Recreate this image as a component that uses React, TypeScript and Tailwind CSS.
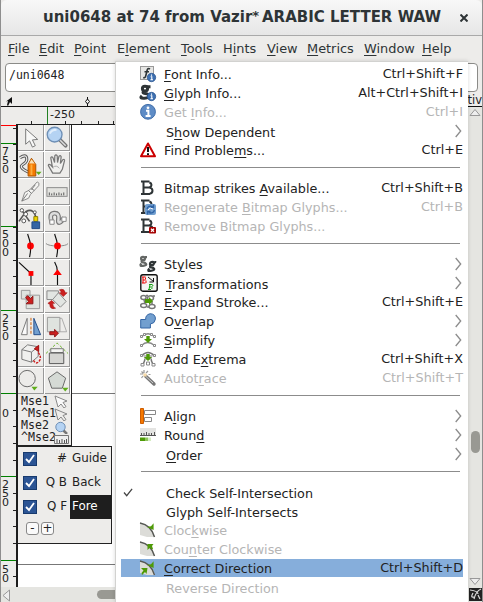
import React from "react";

/** Text in which the letter after "_" is the underlined mnemonic. */
function Mnemonic({ text }: { text: string }) {
  const i = text.indexOf("_");
  if (i < 0) return <>{text}</>;
  return (
    <>
      {text.slice(0, i)}
      <span className="underline decoration-1 underline-offset-[2px]">{text[i + 1]}</span>
      {text.slice(i + 2)}
    </>
  );
}

const menus: [string, string][] = [
  ["_File", "w-[31px]"],
  ["_Edit", "w-[35px]"],
  ["_Point", "w-[43px]"],
  ["E_lement", "w-[64px]"],
  ["_Tools", "w-[42px]"],
  ["H_ints", "w-[44px]"],
  ["_View", "w-[40px]"],
  ["_Metrics", "w-[57px]"],
  ["_Window", "w-[58px]"],
  ["_Help", "w-[40px]"],
];

function InfoBadge() {
  return (
    <g>
      <circle cx="11.5" cy="11.5" r="4.2" fill="#3d6fb0" stroke="#24508d" strokeWidth=".7" />
      <path d="M11.5 8.6v1.2M10.6 10.8h1.2v3M10.4 13.8h2.6" stroke="#fff" strokeWidth="1.1" fill="none" />
    </g>
  );
}

const bitmapB = (
  <path
    d="M1 1.5h8.5M1 14h9M3.5 1.5V14M4.5 7.5h5M9.5 2.5q2 .8 2 2.4t-2 2.5M9.5 7.5q3 .8 3 3.2t-3 3.2"
    fill="none"
    stroke="#2e3436"
    strokeWidth="2"
  />
);

const arcPie = (
  <g>
    <path d="M0 1Q12 3 15 15H7L0 13Z" fill="#dcdcd8" />
    <path d="M0 1Q11 3 14.5 15" fill="none" stroke="#555753" strokeWidth="1.4" />
  </g>
);

function Gee({ x, y, c }: { x: number; y: number; c: string }) {
  return (
    <g transform={`translate(${x} ${y})`} fill="none" stroke={c} strokeWidth="2.3">
      <ellipse cx="3" cy="2.5" rx="1.9" ry="1.7" />
      <path d="M5 1.2h2M2 4.8q-1 1.4 1 1.5t3 1.6-3 1.9-1.7-2.2" />
    </g>
  );
}

const icons: Record<string, React.ReactNode> = {
  font: (
    <g>
      <rect x=".5" y=".5" width="13" height="13" fill="#e6e6e4" stroke="#999" />
      <path d="M10 3Q7.5 1.5 7 5L5.7 10Q5 12.5 3.2 11.5M4.5 5.8h4.5" fill="none" stroke="#2e3436" strokeWidth="1.6" />
      <InfoBadge />
    </g>
  ),
  glyph: (
    <g>
      <g fill="none" stroke="#2e3436" strokeWidth="3">
        <ellipse cx="5" cy="3.6" rx="2.6" ry="2.4" />
        <path d="M7 1.8h3.5M3.5 6.5Q2 8.3 5 8.4t4 2.2-4.5 2.6-2.6-2.4" />
      </g>
      <InfoBadge />
    </g>
  ),
  info: (
    <g>
      <circle cx="8" cy="7.8" r="7.4" fill="#5e8cc6" stroke="#416fab" />
      <circle cx="8" cy="3.8" r="1.4" fill="#fff" />
      <path d="M6 6.800h2.400v5M5.600 12h5" stroke="#fff" strokeWidth="2" fill="none" />
    </g>
  ),
  warn: (
    <g>
      <path d="M8 1.5 15 14.3H1Z" fill="#fff" stroke="#c00" strokeWidth="2" strokeLinejoin="round" />
      <path d="M8 5v5M8 11.2v1.8" stroke="#111" strokeWidth="2" />
    </g>
  ),
  bitmap: bitmapB,
  regen: (
    <g>
      {bitmapB}
      <rect x="5" y="5" width="11" height="11" rx="2" fill="#729fcf" />
      <path d="M7 10q1-4 6-2.5M13.5 5.5v3h-3M14.5 11q-1 4-6 2.7M7.5 15.5v-3h3" stroke="#2f63a5" strokeWidth="1.3" fill="none" />
      <path d="M8 10.8q2-3 5-.8" stroke="#fff" fill="none" />
    </g>
  ),
  remove: (
    <g>
      {bitmapB}
      <rect x="9" y="9" width="7" height="6.5" rx="1" fill="#a40000" />
      <path d="m11 10.8 3 3M14 10.8l-3 3" stroke="#fff" strokeWidth="1.3" />
    </g>
  ),
  styles: (
    <g>
      <Gee x={0} y={0} c="#646765" />
      <g transform="skewX(-10)">
        <Gee x={10.3} y={5} c="#2e3436" />
      </g>
    </g>
  ),
  transform: (
    <g>
      <rect x=".8" y="-.2" width="16.4" height="16.4" rx="2" fill="#f4f4f2" stroke="#111" strokeWidth="1.4" />
      <path d="M2 2h3.5M3 2v6M2 8h3.5M3 5h2.5M5.5 2.5v2M6 5.5V8" stroke="#e00" fill="none" />
      <path d="m8 2 5.5 4.5M13.5 3v4h-4" stroke="#111" fill="none" />
      <path d="M9 9.5h3.5M10 9.5l-1 5M8 14.5h3M9.5 12h2.5M13 10l-.6 1.5M12.3 12.5l-.6 1.5" stroke="#10a010" fill="none" />
    </g>
  ),
  expand: (
    <g>
      <g stroke="#777" strokeWidth="1.5" fill="none">
        <ellipse cx="3.5" cy="3.5" rx="2.6" ry="2" />
        <ellipse cx="10.5" cy="4" rx="3" ry="2.3" />
        <ellipse cx="3.7" cy="11.5" rx="3" ry="2" />
        <ellipse cx="12" cy="12.5" rx="3" ry="2" />
        <path d="M6 1.5h2M4 6l1 3M13 2h2M12 7v3M7 13h2" />
      </g>
      <path d="M5 5h4V3l4 4-4 4V9H5Z" fill="#4e9a06" />
    </g>
  ),
  overlap: (
    <path
      d="M.7 6.5h5q-.5-4.6 4.5-5.8 5.5.3 5.2 5.5-.5 4.3-5 4.8V15H.7Z"
      fill="#729fcf"
      stroke="#3465a4"
    />
  ),
  simplify: (
    <g>
      <path d="M1.5 4.5Q8-1 14.5 4.5M1.5 13.5q6-6 13 0" fill="none" stroke="#888" strokeWidth="1.3" />
      <g fill="#fff" stroke="#888">
        <path d="M.5 3.5h2v2h-2ZM3.5 1.5h2v2h-2ZM10.5 1.5h2v2h-2ZM13.5 3.5h2v2h-2ZM.5 12.5h2v2h-2ZM13.5 12.5h2v2h-2Z" />
      </g>
      <path d="M6.3 4h3.4v3H12L8 11 4 7h2.3Z" fill="#4e9a06" />
    </g>
  ),
  extrema: (
    <g>
      <path d="M1.5 5Q8-2 14.5 5M3 13.5q2-4 2-6M13 13.5q-2-4-2-6" fill="none" stroke="#777" strokeWidth="1.6" />
      <path d="M3 4h10l-2 5H5Z" fill="#bbb" />
      <g fill="#fff" stroke="#888">
        <path d="M.5 3.5h2v2h-2ZM13.5 3.5h2v2h-2ZM1 12.5h3v2.5H1ZM12 12.5h3v2.5h-3ZM6.5 11h3v3h-3Z" />
      </g>
      <path d="M6.3 3h3.4v3H12L8 10 4 6h2.3Z" fill="#4e9a06" />
    </g>
  ),
  trace: (
    <g>
      <path d="m5.5 6 8.5 8" stroke="#777" strokeWidth="3.4" strokeLinecap="round" />
      <path d="m6 6.5 7 6.5" stroke="#ccc" strokeWidth="1" />
      <path d="M4 0v3M0 4h3M1.5 1.5l2 2M6 3l2-2M1.5 8l1.5-2M8.5 4.5h2" stroke="#999" strokeWidth="1.2" />
      <circle cx="5" cy="5" r="1.8" fill="#f5d9a8" />
    </g>
  ),
  align: (
    <g>
      <path d="M.5.5h3v15h-3Z" fill="#f57900" stroke="#ce5c00" />
      <path d="M4.500 2.500h11v4h-11ZM4.500 9.500h7v4h-7Z" fill="#fff" stroke="#888" />
    </g>
  ),
  round: (
    <g>
      <path d="M0 1h16v7H0Z" fill="#e4e4e2" />
      <path d="M0 8.500h16M1.500 8V6M4 8V6M6.500 8V5M9 8V6M11.500 8V6M14.500 8V5" stroke="#555" />
      <path d="M0 10.500h5v3.500H0Z" fill="#4e9a06" />
      <path d="M5 10.500h3v3.500H5Z" fill="#8dc45c" />
      <path d="M8 10.500h3v3.500H8Z" fill="#d4ecc0" />
    </g>
  ),
  cw: (
    <g>
      {arcPie}
      <path d="m7 5 4-.8 2.600-3L13.600 8Z" fill="#4e9a06" />
    </g>
  ),
  ccw: (
    <g>
      {arcPie}
      <path d="M7.500 3h6L12 5l1 3-1.500.5L10 6.500 7.500 9Z" fill="#4e9a06" />
    </g>
  ),
  correct: (
    <g>
      {arcPie}
      <path d="m7 5 4-.8 2.600-3L13.600 8ZM1 8h6.500l-1 6L5 12l-3 3-.5-2 2-2.500Z" fill="#4e9a06" />
    </g>
  ),
};

interface Item {
  t?: string;
  k?: string;
  icon?: string;
  off?: boolean;
  sub?: boolean;
  check?: boolean;
  active?: boolean;
  low?: boolean;
}

const items: Item[] = [
  { t: "_Font Info...", k: "Ctrl+Shift+F", icon: "font" },
  { t: "_Glyph Info...", k: "Alt+Ctrl+Shift+I", icon: "glyph" },
  { t: "Get _Info...", k: "Ctrl+I", icon: "info", off: true },
  { t: "S_how Dependent", sub: true, low: true },
  { t: "Find Proble_ms...", k: "Ctrl+E", icon: "warn" },
  {},
  { t: "Bitmap strikes _Available...", k: "Ctrl+Shift+B", icon: "bitmap" },
  { t: "Regenerate _Bitmap Glyphs...", k: "Ctrl+B", icon: "regen", off: true },
  { t: "Remove Bitmap Glyphs...", icon: "remove", off: true },
  {},
  { t: "St_yles", icon: "styles", sub: true },
  { t: "_Transformations", icon: "transform", sub: true, low: true },
  { t: "_Expand Stroke...", k: "Ctrl+Shift+E", icon: "expand" },
  { t: "O_verlap", icon: "overlap", sub: true },
  { t: "_Simplify", icon: "simplify", sub: true },
  { t: "Add E_xtrema", k: "Ctrl+Shift+X", icon: "extrema" },
  { t: "Autot_race", k: "Ctrl+Shift+T", icon: "trace", off: true },
  {},
  { t: "A_lign", icon: "align", sub: true },
  { t: "Roun_d", icon: "round", sub: true },
  { t: "_Order", sub: true, low: true },
  {},
  { t: "Check Self-Intersection", check: true, low: true },
  { t: "Glyph Self-Intersects", low: true },
  { t: "Cloc_kwise", icon: "cw", off: true },
  { t: "Cou_nter Clockwise", icon: "ccw", off: true },
  { t: "_Correct Direction", k: "Ctrl+Shift+D", icon: "correct", active: true },
  { t: "Reverse Direction", off: true, low: true },
];

function MenuRow({ item }: { item: Item }) {
  if (!item.t) {
    return (
      <div className="flex h-[19px] shrink-0 pt-[7px] pr-[8px] pl-[25px]">
        <div className="h-px flex-1 bg-[#8c8c8c]" />
      </div>
    );
  }
  return (
    <div
      className={`mx-[5px] flex h-[19px] shrink-0 ${item.off ? "text-[#b5b5b5]" : "text-[#222]"} ${
        item.active ? "border-b border-white bg-[#86aedb] bg-clip-padding" : ""
      }`}
    >
      <div className="w-[19px] shrink-0 pt-[5px]">
        {item.check && (
          <svg className="ml-[2px] block" width="11" height="9" viewBox="0 0 12 10">
            <path d="m1 5 3 3.500 6-7.500" fill="none" stroke="#444" strokeWidth="1.400" />
          </svg>
        )}
      </div>
      <div className={`shrink-0 ${item.low ? "w-[26px]" : "w-[24px]"}`}>
        {item.icon && (
          <svg className="mt-px block overflow-visible" width="16" height="16" viewBox="0 0 16 16">
            {icons[item.icon]}
          </svg>
        )}
      </div>
      <div className={`flex-1 leading-[19px] whitespace-pre ${item.low ? "pt-px" : ""}`}>
        <Mnemonic text={item.t} />
      </div>
      {item.k && <div className="leading-[18px]">{item.k}</div>}
      {item.sub && (
        <svg className="mt-[2px] mr-px block" width="7" height="14" viewBox="0 0 7 14">
          <path d="m.7 1 5 6-5 6" fill="none" stroke="#8c8c8c" strokeWidth="1.3" />
        </svg>
      )}
    </div>
  );
}

const red = "#cc1f1f";
const tools: React.ReactNode[] = [
  <path d="M8 4v16l4-3.500 3 6.500 3-1.500-3-6 5.500-.5Z" fill="#f8f8f7" stroke="#777" />,
  <g>
    <path d="m15 15 6.500 6.500" stroke="#777" strokeWidth="4" strokeLinecap="round" />
    <path d="m15 15 6.500 6.500" stroke="#ddd" strokeWidth="1.500" />
    <circle cx="10" cy="10" r="7.700" fill="#b5d3f3" stroke="#6e8fb5" strokeWidth="1.400" />
    <path d="M5 9q2-4 7-4" stroke="#e2effc" strokeWidth="2" fill="none" />
  </g>,
  <g>
    <path d="M2 6Q8 2 9 6T5 13t6 8" fill="none" stroke="#555" strokeWidth="3.200" />
    <path d="M2 6Q8 2 9 6T5 13t6 8" fill="none" stroke="#eee" strokeWidth="1.200" />
    <path d="M10.500 13 14 6.500l4.500 6.500v12h-8Z" fill="#f57900" stroke="#a85200" />
    <path d="m11.500 12 2.500-4.500 3.500 4.500Z" fill="#f9e0b5" />
    <path d="M14 13v11" stroke="#fcaf3e" strokeWidth="2" />
    <path d="M18.500 20.500h6L21.500 24Z" fill="#5fad1c" />
  </g>,
  <g>
    <path
      d="M8 22 3.500 14q0-2 2.500-.5l1.700 2L6 6q1-2 2.300 0L10 11l.2-7q1.200-2 2.500 0l.3 7 1.500-6.500q1.500-1.500 2.300.5L16 12l2.500-4q2-1 1.800 1L18 18l-2.500 4Z"
      fill="#f0f0ee"
      stroke="#777"
      strokeWidth="1.300"
    />
    <path d="M8 16q4-3 7 1" stroke="#aaa" fill="none" />
  </g>,
  <g>
    <path d="m4 23 3-9 5-2.500L20 3q3 1 1.500 4L13 16l-2 4Z" fill="#f4f4f2" stroke="#888" />
    <path d="m4 23 6-8M11 12l3 3M14 10l3 2M18 6l-4 5" stroke="#777" fill="none" />
  </g>,
  <g>
    <rect x="2" y="9" width="21" height="9" fill="#e4e4e0" stroke="#888" />
    <path d="M4.500 17v-3M7 17v-2M9.500 17v-3M12 17v-2M14.500 17v-3M17 17v-2M19.500 17v-3" stroke="#555" />
  </g>,
  <g>
    <path d="M1 16 8 6q9-5 11 8M3 3l9 13" fill="none" stroke="#555" strokeWidth="1.700" />
    <g fill="#fff" stroke="#555">
      <circle cx="4" cy="4.500" r="1.800" />
      <circle cx="8" cy="8.500" r="2" />
      <circle cx="6" cy="15.500" r="2" />
      <circle cx="17.500" cy="6.500" r="1.500" />
    </g>
    <path d="M16.500 11h4v5h-4Z" fill="#edd400" stroke="#8a7b00" />
    <path d="m14.500 16.500 8 0v7h-8Z" fill="#3465a4" stroke="#204a87" />
  </g>,
  <g>
    <path d="M7 17Q4 8 9.500 7.500T14 14t6-1.500" fill="none" stroke="#777" strokeWidth="5" />
    <path d="M7 17Q4 8 9.500 7.500T14 14t6-1.500" fill="none" stroke="#ddd" strokeWidth="2.600" />
    <path d="M5 14.500h4.500V19H5ZM17.500 11.500H22V16h-4.500Z" fill="#fff" stroke="#888" />
  </g>,
  <g>
    <path d="M10 1q5 12 2 24" fill="none" stroke="#111" strokeWidth="1.200" />
    <circle cx="13" cy="13.500" r="3.500" fill="#f00" />
    <path d="M13 9v9" stroke="#b00" strokeWidth=".6" />
  </g>,
  <g>
    <path d="M10 1q5 12 2 24" fill="none" stroke="#111" strokeWidth="1.200" />
    <path d="M1 11q3 2.500 12 2.500T24 11" fill="none" stroke="#888" />
    <circle cx="13" cy="13.500" r="3.500" fill="#f00" />
  </g>,
  <g>
    <path d="M1 2.500 13.500 14v12" fill="none" stroke="#111" strokeWidth="1.200" />
    <path d="M11 11.500h5v5h-5Z" fill="#f00" />
  </g>,
  <g>
    <path d="M10 2q3 5 3 11v13" fill="none" stroke="#111" strokeWidth="1.200" />
    <path d="m8.500 15.500 4.500-6 4.500 6Z" fill="#f00" />
  </g>,
  <g fill="#dfe3df" stroke="#999">
    <path d="M8.500 8.500h14v14h-14ZM3.500 3.500h9v9h-9Z" />
    <path d="m8 11 2-2 3 3 2.500-2.500v8H8.500L11 15Z" fill={red} stroke="#8f1515" />
  </g>,
  <g fill="#e2e5e2" stroke="#888">
    <path d="M2 4h12v9H2Z" />
    <path d="m8 13 6-7 8 9-6 6Z" />
    <path d="M15 3q5-2 6 3h2l-4 4-4-4h2q0-2-2-3ZM3 17l4-3 3 3H8q0 4 3 5-6 2-6-4Z" fill={red} stroke="#a01010" strokeWidth=".6" />
  </g>,
  <g>
    <path d="M3.500 21.500h6v-17Z" fill="#fafafa" stroke="#777" />
    <path d="M16.500 4.500v17h7Z" fill="#729fcf" stroke="#204a87" />
    <path d="M13.500 4v18" stroke="#ce5c00" strokeDasharray="3 1.500" />
  </g>,
  <g>
    <path d="M8.500 4.500h9l5 14h-10Z" fill="none" stroke="#aaa" />
    <path d="M2.500 3.500h13v15h-13Z" fill="#dfe3df" stroke="#999" />
    <path d="M5 18.500h5V16l4 4-4 4v-2.500H5Z" fill={red} stroke="#8f1515" />
  </g>,
  <g>
    <path d="m4 9 6-5 11 2v10l-7 6-10-3Z" fill="#f0f0ee" stroke="#777" />
    <path d="m4 9 10 2.500V22M14 11.500 21 6" fill="none" stroke="#777" />
    <path d="m17 8 4.500-3.500V11Z" fill={red} stroke="#a01010" />
    <path d="M21 12q4 5 1 9t-6-1" fill="none" stroke={red} strokeWidth="1.500" strokeDasharray="2.500 1.200" />
  </g>,
  <g>
    <path d="m1 13 11.500-11L24 13" fill="none" stroke="#6cb52d" strokeDasharray="3 2" />
    <path d="M6 8h13v4H6Z" fill="#f5f5f3" stroke="#777" />
    <path d="M4.500 12.500h15v11h-15Z" fill="#d5d5d2" stroke="#555" />
  </g>,
  <g>
    <circle cx="9.500" cy="11" r="8.500" fill="#ecebe9" stroke="#666" />
    <path d="M14 19.500h6.500L17 23.500Z" fill="#5fad1c" />
  </g>,
  <g>
    <path d="m12.500 4 9 6.500-3.500 10.500H7L3.500 10.500Z" fill="#d5dad5" stroke="#666" />
    <path d="M18 20.500h6.500L21 24.500Z" fill="#5fad1c" />
  </g>,
];

function Cursor({ dim }: { dim?: boolean }) {
  return (
    <svg className="block shrink-0" width="15" height="13" viewBox="0 0 15 13">
      <path d="m1 1 3 11 3-3 3 4 2-1.500-3-4 4-1.500Z" fill={dim ? "none" : "#fafafa"} stroke="#888" />
    </svg>
  );
}

const vTicks = [128, 144, 160, 177, 193, 210, 227, 243, 260, 276, 293, 310, 326, 343, 360, 376, 393, 410, 426, 443, 460, 476, 493, 510, 526, 543, 560, 576];

/** A ruler number, written one digit below the other. */
function RulerNumber({ digits, gap }: { digits: string; gap: string }) {
  return (
    <div className={`flex flex-col ${gap}`}>
      {digits.split("").map((d, i) => (
        <span key={i} className="block h-[9px] leading-[9px]">
          {d}
        </span>
      ))}
    </div>
  );
}

function Layer({ flags, name, on }: { flags: string; name: string; on?: boolean }) {
  return (
    <div className="flex h-[24px] items-center">
      <div className="ml-[5px] flex size-[14px] items-center justify-center border border-[#173a6e] bg-[#2b5494]">
        <svg width="10" height="10" viewBox="0 0 10 10">
          <path d="m1 5 3 3 5-7" fill="none" stroke="#fff" strokeWidth="1.800" />
        </svg>
      </div>
      <div className="w-[33px] pr-[3px] text-right">{flags}</div>
      <div className={`flex h-full flex-1 items-center pl-[2px] ${on ? "bg-[#1e1e1e] text-white" : ""}`}>{name}</div>
    </div>
  );
}

export default function App() {
  return (
    <div className="relative flex h-[602px] w-[483px] flex-col overflow-hidden border-x border-[#8e8e8e] bg-[#edecea] font-['DejaVu_Sans',sans-serif] text-[12.750px] text-[#222]">
      <div className="flex h-[36px] shrink-0 items-center rounded-t-[6px] border-b border-[#a9a9a9] bg-linear-to-b from-[#f8f8f8] to-[#e6e6e6] pl-[42px]">
        <div className="flex w-[398px] text-[15px] font-bold whitespace-pre text-[#2e3436]">
          <span>uni0648 at 74 from Vazir</span>
          <span className="w-[10px] text-[13px]">*</span>
          <span>ARABIC LETTER WAW</span>
        </div>
        <svg className="ml-[19px] block" width="8" height="8" viewBox="0 0 8 8">
          <path d="m.5.5 7 7M7.500.5l-7 7" stroke="#2e3436" strokeWidth="2" />
        </svg>
      </div>
      <nav className="flex h-[25px] shrink-0 items-center pl-[7px] text-[12.900px] whitespace-nowrap text-[#2e3436]">
        {menus.map(([t, w]) => (
          <div key={t} className={w}>
            <Mnemonic text={t} />
          </div>
        ))}
      </nav>
      <div className="flex h-[33px] shrink-0 pt-[2px] pr-[4px] pl-[4px]">
        <div className="h-[29px] flex-1 rounded-[4px] border border-[#8b8b88] bg-white pt-[4px] pl-[3px] font-['DejaVu_Sans_Mono',monospace] text-[11.500px] leading-[14px]">
          /uni0648
        </div>
      </div>
      <div className="flex h-[13px] shrink-0 border-b border-[#111]">
        <svg width="110" height="13" viewBox="0 0 110 13">
          <path d="M11 3v7L9 8l-2 4-1-1 1-4-2 .5Z" fill="#111" />
          <path d="M86.500 3v9" stroke="#111" />
          <path d="m86.500 5 2 2.500-2 2.500-2-2.500Z" fill="#eee" stroke="#111" />
        </svg>
        <div className="ml-auto text-[11.500px] leading-[12px]">tiv</div>
      </div>
      <div className="flex min-h-0 flex-1">
        <div className="flex min-w-0 flex-1 flex-col">
          <svg className="block shrink-0" width="120" height="17" viewBox="0 0 120 17">
            <path d="M30.500 14v3M64.500 14v3M80.500 14v3M97.500 14v3M112.500 14v3" stroke="#222" />
            <path d="M46.500 0v17" stroke="#228022" />
            <text x="49" y="11" fontSize="11" fill="#222">-250</text>
          </svg>
          <div className="flex min-h-0 flex-1">
            <div className="flex w-[15px] shrink-0">
              <div className="flex w-[7px] shrink-0 flex-col pt-[23px] pl-px text-[11px]">
                <RulerNumber digits="750" gap="h-[83px]" />
                <RulerNumber digits="500" gap="h-[84px]" />
                <RulerNumber digits="250" gap="h-[95px]" />
                <RulerNumber digits="0" gap="h-[71px]" />
                <RulerNumber digits="250" gap="h-[85px]" />
                <RulerNumber digits="50" gap="h-[18px]" />
              </div>
              <svg className="-ml-[7px] block shrink-0" width="15" height="463" viewBox="1 124 15 463">
                {vTicks.map((y) => (
                  <path key={y} d={`M13 ${y + 0.5}h4`} stroke="#222" />
                ))}
                <path d="M0 125.500h17" stroke="#f00" />
                <path d="M0 143.500h17M0 226.500h17M0 310.500h17M0 393.500h17M0 476.500h17M0 560.500h17" stroke="#008000" />
              </svg>
            </div>
            <div className="flex min-w-0 flex-1 flex-col border-t border-l-2 border-[#1d1d1d] bg-white">
              <div className="flex h-[269px] shrink-0">
                <div className="grid w-[54px] shrink-0 grid-cols-2 border-r border-[#222]">
                  {tools.map((t, i) => (
                    <div
                      key={i}
                      className="mr-px mb-px h-[26px] border-r border-b border-[#999] bg-[#edecea]"
                    >
                      <svg className="block" width="25" height="25" viewBox="0 0 26 26">
                        {t}
                      </svg>
                    </div>
                  ))}
                </div>
                <div className="flex-1 border-b border-[#777]" />
              </div>
              <div className="flex h-[52px] w-[54px] shrink-0 overflow-hidden border-r border-b border-[#222] bg-[#edecea] font-['DejaVu_Sans_Mono',monospace] text-[11.600px] leading-[12px]">
                <div className="w-[36px] pt-px pl-[3px] whitespace-pre">
                  <div>Mse1</div>
                  <div>^Mse1</div>
                  <div>Mse2</div>
                  <div>^Mse2</div>
                </div>
                <div className="z-10 flex flex-col pt-[1px]">
                  <Cursor />
                  <Cursor dim />
                  <svg className="block" width="15" height="13" viewBox="0 0 15 13">
                    <path d="m9 9 4 4" stroke="#777" strokeWidth="2.500" />
                    <circle cx="6.500" cy="6" r="4.700" fill="#b5d3f3" stroke="#6e8fb5" />
                  </svg>
                  <svg className="block" width="15" height="11" viewBox="0 0 15 11">
                    <path d="M.5 1.500h14v8H.5Z" fill="#eee" stroke="#777" />
                    <path d="M3 9V5M5.500 9V6M8 9V5M10.500 9V6M12.500 9V5" stroke="#555" />
                  </svg>
                </div>
              </div>
              <div className="flex h-[98px] w-[94px] shrink-0 flex-col border-y border-r border-[#222] bg-[#edecea] text-[11.900px]">
                <Layer flags="#" name="Guide" />
                <Layer flags="Q B" name="Back" />
                <Layer flags="Q F" name="Fore" on />
                <div className="flex gap-[2px] pt-[3px] pl-[8px] leading-[11px]">
                  <div className="size-[13px] rounded-[3px] border border-[#888] bg-[#fafafa] text-center">-</div>
                  <div className="flex size-[13px] justify-center rounded-[3px] border border-[#888] bg-[#fafafa]">+</div>
                </div>
              </div>
              <div className="h-[21px] shrink-0 border-b border-[#777]" />
            </div>
          </div>
          <div className="flex h-[15px] shrink-0 items-center bg-[#e5e5e1]">
            <svg width="12" height="14" viewBox="0 0 12 14">
              <path d="M8.500 2v11L2 7.500Z" fill="#eee" stroke="#999" />
            </svg>
            <div className="ml-[84px] h-[9px] w-[40px] rounded-full bg-[#999993]" />
          </div>
        </div>
        <div className="flex w-[14px] shrink-0 flex-col items-center bg-[#e5e5e1]">
          <svg className="block" width="12" height="11" viewBox="0 0 12 11">
            <path d="m6 2.500 5 6H1Z" fill="#eee" stroke="#999" />
          </svg>
          <div className="mt-[313px] h-[22px] w-[9px] shrink-0 rounded-full bg-[#999993]" />
          <svg className="mt-[123px] block shrink-0" width="12" height="11" viewBox="0 0 12 11">
            <path d="M1 2.500h10l-5 6Z" fill="#eee" stroke="#999" />
          </svg>
          <svg className="block shrink-0" width="13" height="14" viewBox="0 0 13 14">
            <path d="M0 1h13v13H0Z" fill="#222" />
            <path d="M1 3q8 1 8 4M5 12Q7 4 12 2M4 6q-3 5 1 4M9 8l2 4" stroke="#ddd" strokeWidth="1.200" fill="none" />
          </svg>
        </div>
      </div>
      <div className="absolute top-[61px] left-[114px] flex h-[541px] w-[353px] flex-col overflow-hidden border-t border-l border-[#d2d2d0] bg-white pt-[3px] shadow-[0_0_4px_rgba(0,0,0,0.15)]">
        {items.map((it, i) => (
          <MenuRow key={i} item={it} />
        ))}
      </div>
    </div>
  );
}
